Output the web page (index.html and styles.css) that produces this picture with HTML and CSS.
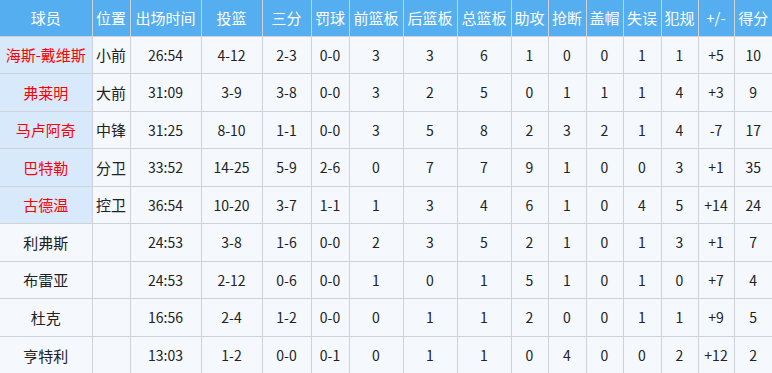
FILE: index.html
```html
<!DOCTYPE html>
<html lang="zh">
<head>
  <meta charset="UTF-8" />
  <title>球员数据</title>
  <link rel="stylesheet" href="styles.css">
</head>
<body>
  <table class="stats">
    <colgroup>
      <col style="width:92px"><col style="width:38px"><col style="width:71px"><col style="width:61px">
      <col style="width:49px"><col style="width:38px"><col style="width:54px"><col style="width:54px">
      <col style="width:54px"><col style="width:37px"><col style="width:38px"><col style="width:37px">
      <col style="width:38px"><col style="width:37px"><col style="width:36px"><col style="width:38px">
    </colgroup>
    <thead>
      <tr>
        <th>球员</th><th>位置</th><th>出场时间</th><th>投篮</th><th>三分</th><th>罚球</th>
        <th>前篮板</th><th>后篮板</th><th>总篮板</th><th>助攻</th><th>抢断</th><th>盖帽</th>
        <th>失误</th><th>犯规</th><th>+/-</th><th>得分</th>
      </tr>
    </thead>
    <tbody>
      <tr><td class="name starter">海斯-戴维斯</td><td class="pos">小前</td><td>26:54</td><td>4-12</td><td>2-3</td><td>0-0</td><td>3</td><td>3</td><td>6</td><td>1</td><td>0</td><td>0</td><td>1</td><td>1</td><td>+5</td><td>10</td></tr>
      <tr><td class="name starter">弗莱明</td><td class="pos">大前</td><td>31:09</td><td>3-9</td><td>3-8</td><td>0-0</td><td>3</td><td>2</td><td>5</td><td>0</td><td>1</td><td>1</td><td>1</td><td>4</td><td>+3</td><td>9</td></tr>
      <tr><td class="name starter">马卢阿奇</td><td class="pos">中锋</td><td>31:25</td><td>8-10</td><td>1-1</td><td>0-0</td><td>3</td><td>5</td><td>8</td><td>2</td><td>3</td><td>2</td><td>1</td><td>4</td><td>-7</td><td>17</td></tr>
      <tr><td class="name starter">巴特勒</td><td class="pos">分卫</td><td>33:52</td><td>14-25</td><td>5-9</td><td>2-6</td><td>0</td><td>7</td><td>7</td><td>9</td><td>1</td><td>0</td><td>0</td><td>3</td><td>+1</td><td>35</td></tr>
      <tr><td class="name starter">古德温</td><td class="pos">控卫</td><td>36:54</td><td>10-20</td><td>3-7</td><td>1-1</td><td>1</td><td>3</td><td>4</td><td>6</td><td>1</td><td>0</td><td>4</td><td>5</td><td>+14</td><td>24</td></tr>
      <tr><td class="name">利弗斯</td><td class="pos"></td><td>24:53</td><td>3-8</td><td>1-6</td><td>0-0</td><td>2</td><td>3</td><td>5</td><td>2</td><td>1</td><td>0</td><td>1</td><td>3</td><td>+1</td><td>7</td></tr>
      <tr><td class="name">布雷亚</td><td class="pos"></td><td>24:53</td><td>2-12</td><td>0-6</td><td>0-0</td><td>1</td><td>0</td><td>1</td><td>5</td><td>1</td><td>0</td><td>1</td><td>0</td><td>+7</td><td>4</td></tr>
      <tr><td class="name">杜克</td><td class="pos"></td><td>16:56</td><td>2-4</td><td>1-2</td><td>0-0</td><td>0</td><td>1</td><td>1</td><td>2</td><td>0</td><td>0</td><td>1</td><td>1</td><td>+9</td><td>5</td></tr>
      <tr><td class="name">亨特利</td><td class="pos"></td><td>13:03</td><td>1-2</td><td>0-0</td><td>0-1</td><td>0</td><td>1</td><td>1</td><td>0</td><td>4</td><td>0</td><td>0</td><td>2</td><td>+12</td><td>2</td></tr>
    </tbody>
  </table>
</body>
</html>
```

FILE: styles.css
```css
* {
  box-sizing: border-box;
  margin: 0;
  padding: 0;
}

body {
  background: #f5f9fd;
  font-family: "Noto Sans CJK SC", "Open Sans", sans-serif;
  overflow: hidden;
}

.stats {
  width: 772px;
  table-layout: fixed;
  border-collapse: collapse;
  background: #f5f9fd;
  color: #222;
}

.stats th,
.stats td {
  border: 1px solid #cfd2d6;
  text-align: center;
  white-space: nowrap;
  overflow: hidden;
  padding: 0;
}

.stats tr > :first-child {
  border-left: none;
}

.stats tr > :last-child {
  border-right: none;
}

.stats thead tr > * {
  border-top: none;
}

.stats th {
  background: #55aef0;
  color: #fff;
  font-weight: normal;
  font-size: 15px;
  height: 36px;
}

.stats td {
  font-size: 14px;
  height: 37.5px;
}

.stats td.name,
.stats td.pos {
  font-size: 15px;
}

.stats tbody tr:last-child td {
  border-bottom: none;
}

.name.starter {
  background: #d7e9fb;
  color: #f00;
}
```
